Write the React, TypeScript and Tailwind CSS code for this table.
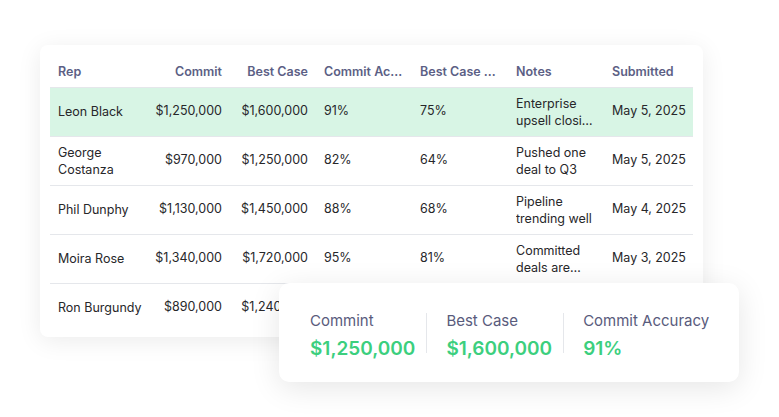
import React from 'react';

const rows = [
  { rep: 'Leon Black', commit: '$1,250,000', best: '$1,600,000', ca: '91%', bca: '75%', notes: 'Enterprise', notesMore: 'upsell closing this week', date: 'May 5, 2025', active: true },
  { rep: 'George Costanza', commit: '$970,000', best: '$1,250,000', ca: '82%', bca: '64%', notes: 'Pushed one deal to Q3', date: 'May 5, 2025' },
  { rep: 'Phil Dunphy', commit: '$1,130,000', best: '$1,450,000', ca: '88%', bca: '68%', notes: 'Pipeline trending well', date: 'May 4, 2025' },
  { rep: 'Moira Rose', commit: '$1,340,000', best: '$1,720,000', ca: '95%', bca: '81%', notes: 'Committed deals are secured', date: 'May 3, 2025' },
  { rep: 'Ron Burgundy', commit: '$890,000', best: '$1,240,000', ca: '85%', bca: '70%', notes: 'Steady quarter', date: 'May 2, 2025' },
];

const stats = [
  { label: 'Commint', value: '$1,250,000' },
  { label: 'Best Case', value: '$1,600,000' },
  { label: 'Commit Accuracy', value: '91%' },
];

export default function App() {
  return (
    <div className="relative w-[779px] h-[417px] bg-white overflow-hidden font-['Inter',sans-serif]">
      <div className="ml-[40px] mt-[45px] w-[663px] rounded-lg bg-white px-[10px] pt-[10px] pb-[5px] shadow-[0_4px_24px_rgba(0,0,0,0.08)]">
        <table className="w-[643px] table-fixed border-collapse text-[12.5px] text-[#27272a]">
          <colgroup>
            <col className="w-[96px]" />
            <col className="w-[84px]" />
            <col className="w-[86px]" />
            <col className="w-[96px]" />
            <col className="w-[96px]" />
            <col className="w-[96px]" />
            <col className="w-[89px]" />
          </colgroup>
          <thead>
            <tr className="h-[32px] border-b border-[#e5e7eb] text-[#5c5f85]">
              <th className="px-2 pt-[4px] text-left font-semibold">Rep</th>
              <th className="px-2 pt-[4px] text-right font-semibold">Commit</th>
              <th className="px-2 pt-[4px] text-right font-semibold">Best Case</th>
              <th className="px-2 pt-[4px] text-left font-semibold truncate">Commit Accuracy</th>
              <th className="px-2 pt-[4px] text-left font-semibold truncate">Best Case Accuracy</th>
              <th className="px-2 pt-[4px] text-left font-semibold">Notes</th>
              <th className="px-2 pt-[4px] text-left font-semibold">Submitted</th>
            </tr>
          </thead>
          <tbody>
            {rows.map((r, i) => (
              <tr
                key={r.rep}
                className={`h-[49px] ${i < rows.length - 1 ? 'border-b border-[#e5e7eb]' : ''} ${r.active ? 'bg-[#d8f5e5]' : ''}`}
              >
                <td className="pl-2 pr-0 leading-[17px]">{r.rep}</td>
                <td className="px-2 text-right whitespace-nowrap">{r.commit}</td>
                <td className="px-2 text-right whitespace-nowrap">{r.best}</td>
                <td className="px-2">{r.ca}</td>
                <td className="px-2">{r.bca}</td>
                <td className="px-2 leading-[17px]">
                  {r.notesMore ? (
                    <>
                      <div className="truncate">{r.notes}</div>
                      <div className="truncate">{r.notesMore}</div>
                    </>
                  ) : (
                    <div className="line-clamp-2">{r.notes}</div>
                  )}
                </td>
                <td className="px-2 whitespace-nowrap">{r.date}</td>
              </tr>
            ))}
          </tbody>
        </table>
      </div>

      <div className="absolute left-[279px] top-[283px] w-[460px] h-[99px] rounded-[10px] bg-white shadow-[0_6px_30px_rgba(0,0,0,0.1)] flex items-center pl-[31px] pt-[7px]">
        {stats.map((s, i) => (
          <React.Fragment key={s.label}>
            {i > 0 && <div className="w-px h-[40px] bg-[#e5e7eb] -mt-[7px]" />}
            <div className={`flex flex-col ${i > 0 ? 'pl-[19px]' : ''} ${i < stats.length - 1 ? 'pr-[11px]' : ''}`}>
              <div className="text-[15px] leading-[20px] text-[#595b7c]">{s.label}</div>
              <div className="mt-[6px] text-[19px] leading-[24px] font-semibold text-[#3ccf7e] whitespace-nowrap">{s.value}</div>
            </div>
          </React.Fragment>
        ))}
      </div>
    </div>
  );
}
